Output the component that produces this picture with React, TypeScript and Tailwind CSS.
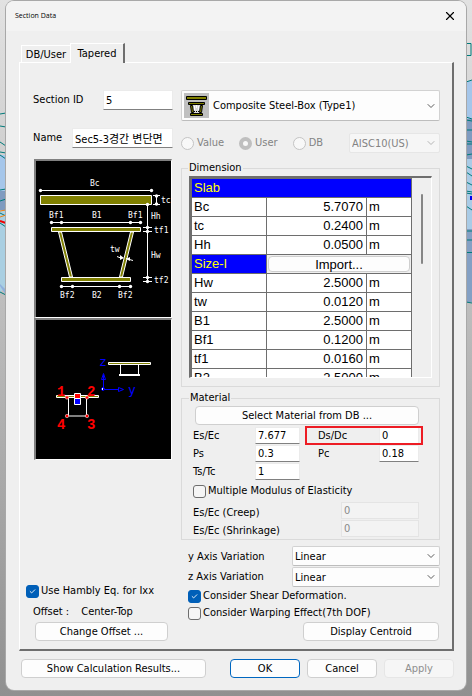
import type { ReactNode } from "react";
import { Check, ChevronDown, X } from "lucide-react";
import clsx from "clsx";

type Dimension = { name: string; value: string };

const slabRows: Dimension[] = [
  { name: "Bc", value: "5.7070" },
  { name: "tc", value: "0.2400" },
  { name: "Hh", value: "0.0500" },
];

const girderRows: Dimension[] = [
  { name: "Hw", value: "2.5000" },
  { name: "tw", value: "0.0120" },
  { name: "B1", value: "2.5000" },
  { name: "Bf1", value: "0.1200" },
  { name: "tf1", value: "0.0160" },
  { name: "B2", value: "2.5000" },
];

function Backdrop() {
  return (
    <>
      <svg className="absolute left-0 top-0" width="6" height="696" fill="none" aria-hidden="true">
        <path d="M0 155h6v36H0z" fill="#a5c6ea" />
        <path d="M0 191h6v19H0z" fill="#7f9bc0" />
        <path d="M0 210h6v76l-6 7z" fill="#a9cfe2" />
        <path d="M0 286l6 9v-5l-6-6z" fill="#8fb0dd" />
        <path
          d="M0 114l6-1M0 126l6 1M0 142l6 4M0 152l6 1M0 155l6 4M0 190l6-1M0 201l6-2M0 213l6 3M0 223l6 4M0 292l6 3"
          stroke="#007a7a"
        />
        <path d="M0 211l6-1M0 217l6-2" stroke="#f08010" />
        <path d="M0 221l6 2" stroke="#f00000" strokeWidth="2" />
      </svg>
      <svg className="absolute right-0 top-0" width="6" height="696" fill="none" aria-hidden="true">
        <path d="M0 81h6v38H0z" fill="#a5c6ea" />
        <path d="M0 119h6v40H0z" fill="#7f9bc0" />
        <path d="M0 159h6v70H0z" fill="#a9cbe6" />
        <path d="M0 229h6v73H0z" fill="#84a0c4" />
        <path
          d="M0 43.500h5v12H0M0 82l6-2M0 117l6 2M0 120l6 1M0 130l6 0M0 141l6 1M0 144l6 0M0 155l6-1M0 166l6 3M0 172l6 4M0 182l6 3M0 191l6 1M0 193l6 1M0 206l6 4M0 231l6 0M0 240l6 0M0 252.500h6M0 302l6 1"
          stroke="#007a7a"
        />
        <path d="M4 196h2v4H4z" fill="#0000f0" />
      </svg>
    </>
  );
}

function Button({
  children,
  className,
  disabled,
  primary,
}: {
  children: ReactNode;
  className?: string;
  disabled?: boolean;
  primary?: boolean;
}) {
  return (
    <button
      type="button"
      disabled={disabled}
      className={clsx(
        "flex h-[19px] items-center justify-center rounded-[4px] border bg-[#fdfdfd] text-[11px] leading-none disabled:border-[#e6e6e6] disabled:bg-[#f6f6f6] disabled:text-[#8e8e8e]",
        primary ? "border-[#0067c0]" : "border-[#cfcfcf]",
        className
      )}
    >
      {children}
    </button>
  );
}

function TextBox({
  id,
  value,
  className,
  disabled,
}: {
  id: string;
  value: string;
  className?: string;
  disabled?: boolean;
}) {
  return (
    <input
      id={id}
      type="text"
      defaultValue={value}
      disabled={disabled}
      className={clsx(
        "min-w-0 border border-[#ebebeb] border-b-[#808080] bg-white px-0.5 text-[11px] leading-none outline-none disabled:border-[#e4e4e4] disabled:bg-[#f3f3f3] disabled:text-[#8a8a8a]",
        className
      )}
    />
  );
}

function CheckBox({ label, checked }: { label: string; checked?: boolean }) {
  return (
    <label className="flex h-[14px] items-center gap-[2px] whitespace-nowrap">
      <span className="relative flex">
        <input
          type="checkbox"
          defaultChecked={checked}
          className="peer size-[13px] appearance-none rounded-[3px] border border-[#6e6e6e] bg-[#f5f5f5] checked:border-[#005fb8] checked:bg-[#005fb8]"
        />
        <Check
          className="pointer-events-none absolute left-[3px] top-[3px] hidden size-[7px] text-white peer-checked:block"
          strokeWidth={3}
        />
      </span>
      {label}
    </label>
  );
}

function Radio({ label, checked }: { label: string; checked?: boolean }) {
  return (
    <label className="flex items-center gap-[3px] text-[#838383]">
      <input
        type="radio"
        name="source"
        defaultChecked={checked}
        disabled
        className="size-[13px] appearance-none rounded-full border border-[#c4c4c4] bg-[#f8f8f8] checked:border-4 checked:border-[#bfbfbf]"
      />
      {label}
    </label>
  );
}

function Select({
  id,
  label,
  value,
  className,
  disabled,
  icon,
}: {
  id: string;
  label?: string;
  value: string;
  className?: string;
  disabled?: boolean;
  icon?: ReactNode;
}) {
  return (
    <div
      className={clsx(
        "relative flex items-center rounded-[2px] border px-0.5",
        disabled
          ? "border-[#e6e6e6] bg-[#f6f6f6] text-[#838383]"
          : "border-[#d2d2d2] border-b-[#bdbdbd] bg-[#fdfdfd]",
        className
      )}
    >
      {icon}
      <select
        id={id}
        aria-label={label}
        disabled={disabled}
        className="h-full min-w-0 flex-1 appearance-none bg-transparent text-[11px] leading-none outline-none"
      >
        <option>{value}</option>
      </select>
      <ChevronDown
        className={clsx(
          "pointer-events-none absolute right-[2px] size-[12px]",
          disabled ? "text-[#b5b5b5]" : "text-[#5c5c5c]"
        )}
        strokeWidth={2}
      />
    </div>
  );
}

function BoxSectionIcon() {
  return (
    <svg width="25" height="25" viewBox="0 0 25 25" className="mr-1 shrink-0 bg-[#c0c0c0]" aria-hidden="true">
      <path d="M8 12h9v9H8z" fill="#dcdcdc" />
      <path d="M10.500 13v4M12.500 12v3M14.500 13v4" stroke="#fff" />
      <g fill="#808000" stroke="#000">
        <path d="M2.500 3.500h20v3h-20z" />
        <path d="M6.500 12.500h2l1 7h-2zM18.500 12.500h-2l-1 7h2z" />
        <path d="M4.500 9.500h16v2h-16zM6.500 20.500h12v2h-12z" />
      </g>
      <path d="M10 18.500h5" stroke="#000" strokeDasharray="1 1" />
    </svg>
  );
}

function Dot({ x, y }: { x: number; y: number }) {
  return <circle cx={x} cy={y} r="1.700" fill="#fff" />;
}

function SectionDiagram() {
  return (
    <svg viewBox="6 6 135 156" className="block w-full bg-black" role="img" aria-label="Section dimensions">
      <g fill="#808000" stroke="#fff">
        <path d="M10.500 40.500h111v9h-111zM21.500 72.500h89v4h-89zM31.500 122.500h69v4h-69z" />
        <path d="M28.500 77h3l11 45h-3zM100.500 77h3l-11 45h-3z" />
      </g>
      <g stroke="#fff" fill="none">
        <path d="M10 35.500h112M21 67.500h90M31 131.500h70M117.500 49v78M126.500 40v10" />
        <path d="M123 40.500h7M123 49.500h7M113 72.500h9M113 76.500h9M113 122.500h9M113 126.500h9M87 101.500l5 2M96 103.500l7 2" />
      </g>
      <path d="M90 100l4 3-4 2zM100 102l-4 2 4 2z" fill="#fff" />
      <Dot x={10.5} y={35.5} />
      <Dot x={121.5} y={35.5} />
      <Dot x={21.5} y={67.5} />
      <Dot x={31.5} y={67.5} />
      <Dot x={100.5} y={67.5} />
      <Dot x={110.5} y={67.5} />
      <Dot x={31.5} y={131.5} />
      <Dot x={42.5} y={131.5} />
      <Dot x={89.5} y={131.5} />
      <Dot x={100.5} y={131.5} />
      <Dot x={117.5} y={49.5} />
      <Dot x={117.5} y={72.5} />
      <Dot x={117.5} y={76.5} />
      <Dot x={117.5} y={122.5} />
      <Dot x={117.5} y={126.5} />
      <Dot x={126.5} y={41} />
      <Dot x={126.5} y={49} />
      <g fill="#fff" className="font-['DejaVu_Sans_Mono',monospace] text-[8px]">
        <text x="60" y="31">Bc</text>
        <text x="131" y="48">tc</text>
        <text x="19" y="63">Bf1</text>
        <text x="62" y="63">B1</text>
        <text x="98" y="63">Bf1</text>
        <text x="121" y="64">Hh</text>
        <text x="124" y="78">tf1</text>
        <text x="80" y="97">tw</text>
        <text x="121" y="103">Hw</text>
        <text x="124" y="128">tf2</text>
        <text x="30" y="143">Bf2</text>
        <text x="62" y="143">B2</text>
        <text x="88" y="143">Bf2</text>
      </g>
    </svg>
  );
}

function OffsetDiagram() {
  return (
    <svg viewBox="6 5 135 139" className="block w-full bg-black" role="img" aria-label="Section offset">
      <g fill="#808000" stroke="#fff">
        <path d="M78.500 47.500h42v2h-42zM26.500 80.500h42v2h-42z" />
      </g>
      <g fill="none" stroke="#fff">
        <path d="M90.500 50v9M108.500 50v9M38.500 83v18h18V83" />
        <path d="M89 60h21" strokeWidth="2" />
      </g>
      <g fill="none" stroke="#00f">
        <path d="M73.500 74V60M74 74.500h15M71.500 64.500l2-6 2 6zM88.500 72.500l5 2-5 2z" />
        <circle cx="73" cy="74" r="1.500" />
      </g>
      <path d="M72 73h1v2h-1z" fill="#fff" />
      <g stroke="#fff">
        <path d="M44.500 78.500h6v5h-6z" fill="red" />
        <path d="M44.500 83.500h6v6h-6z" fill="#00f" />
      </g>
      <g fill="red" stroke="#fff" strokeWidth="0.500">
        <circle cx="37" cy="82.500" r="1.700" />
        <circle cx="57" cy="82.500" r="1.700" />
        <circle cx="37" cy="101" r="1.700" />
        <circle cx="57" cy="101" r="1.700" />
      </g>
      <g fill="#00f" className="font-['DejaVu_Sans_Mono',monospace] text-[13px]">
        <text x="69" y="51">z</text>
        <text x="98" y="79">y</text>
      </g>
      <g fill="red" className="font-['Liberation_Mono',monospace] text-[14px] font-bold">
        <text x="27" y="81">1</text>
        <text x="57" y="81">2</text>
        <text x="57" y="114">3</text>
        <text x="27" y="114">4</text>
      </g>
    </svg>
  );
}

function DimensionRow({ name, value }: Dimension) {
  return (
    <tr className="h-[19px]">
      <td className="border border-[#6e6e6e] px-0.5">{name}</td>
      <td className="border border-[#6e6e6e] px-[3px] text-right">{value}</td>
      <td className="border border-[#6e6e6e] px-0.5">m</td>
    </tr>
  );
}

function DimensionTable() {
  return (
    <div className="flex h-[202px] overflow-hidden border-2 border-b border-r border-[#6e6e6e] border-b-white border-r-white">
      <table className="h-min w-[221px] table-fixed border-collapse bg-white font-['Liberation_Sans',Arial,sans-serif] text-[13px] leading-4">
        <colgroup>
          <col className="w-[75px]" />
          <col className="w-[100px]" />
          <col className="w-[45px]" />
        </colgroup>
        <tbody>
          <tr className="h-[19px]">
            <th colSpan={3} className="border border-[#6e6e6e] bg-[#0000ff] px-0.5 text-left font-normal text-[#ffff00]">
              Slab
            </th>
          </tr>
          {slabRows.map((row) => (
            <DimensionRow key={row.name} {...row} />
          ))}
          <tr className="h-[19px]">
            <th className="border border-[#6e6e6e] bg-[#0000ff] px-0.5 text-left font-normal text-[#ffff00]">Size-I</th>
            <td colSpan={2} className="border border-[#6e6e6e] bg-[#efefef] px-px">
              <button
                type="button"
                className="block h-4 w-full rounded-[4px] border border-[#cfcfcf] bg-[#fdfdfd] leading-none"
              >
                Import...
              </button>
            </td>
          </tr>
          {girderRows.map((row) => (
            <DimensionRow key={row.name} {...row} />
          ))}
        </tbody>
      </table>
      <div className="flex flex-1 justify-center pt-4">
        <div className="h-[70px] w-[2px] rounded-full bg-[#858585]" />
      </div>
    </div>
  );
}

export default function App() {
  return (
    <main className="relative min-h-screen bg-gradient-to-b from-[#e2e2e2] to-[#909090] px-1.5 pt-px font-['DejaVu_Sans_Condensed','Noto_Sans_CJK_KR',sans-serif] text-[11px] leading-3 text-black">
      <Backdrop />
      <section className="relative overflow-hidden rounded-[8px] bg-[#efefef] shadow-[0_0_0_1px_#a8a8a8]">
        <header className="flex h-[30px] items-center justify-between bg-[#f3f3f3] px-[9px]">
          <h1 className="font-['Open_Sans',sans-serif] text-[7px]">Section Data</h1>
          <button type="button" aria-label="Close">
            <X className="size-[14px]" strokeWidth={2} />
          </button>
        </header>

        <div className="pb-3 pl-[13px] pr-3 pt-3">
          <div className="flex items-end pl-[2px]" role="tablist">
            <button
              type="button"
              role="tab"
              className="h-[17px] w-[49px] border-l border-t border-white text-[11px] leading-none"
            >
              DB/User
            </button>
            <button
              type="button"
              role="tab"
              aria-selected="true"
              className="relative -mb-px h-5 w-[55px] border-l border-r-2 border-t border-white border-r-[#6e6e6e] bg-[#efefef] text-[11px] leading-none"
            >
              Tapered
            </button>
          </div>

          <div className="flex gap-2 border-b-2 border-l border-r-2 border-t border-white border-b-[#6e6e6e] border-r-[#6e6e6e] pb-2 pl-1.5 pr-3 pt-[27px]">
            <div className="flex w-[147px] shrink-0 flex-col">
              <div className="flex flex-col pl-[7px]">
                <div className="flex items-center justify-between">
                  <label htmlFor="section-id">Section ID</label>
                  <TextBox id="section-id" value="5" className="h-5 w-[70px]" />
                </div>
                <div className="mt-[18px] flex items-center gap-2">
                  <label htmlFor="name" className="w-[31px]">
                    Name
                  </label>
                  <TextBox id="name" value="Sec5-3경간 변단면" className="h-5 flex-1" />
                </div>
                <div className="mx-px mt-[11px] border-2 border-b border-r border-[#808080] border-b-white border-r-white">
                  <SectionDiagram />
                </div>
                <div className="mx-px border-2 border-b border-r border-[#808080] border-b-white border-r-white">
                  <OffsetDiagram />
                </div>
              </div>
              <div className="mt-auto flex flex-col gap-1">
                <CheckBox label="Use Hambly Eq. for Ixx" checked />
                <p className="flex gap-3 pl-[7px] pt-1">
                  <span>Offset :</span>
                  <span>Center-Top</span>
                </p>
                <Button className="ml-[9px] w-[133px]">Change Offset ...</Button>
              </div>
            </div>

            <div className="flex min-w-0 flex-1 flex-col">
              <Select
                id="section-type"
                label="Section type"
                value="Composite Steel-Box (Type1)"
                className="h-[31px]"
                icon={<BoxSectionIcon />}
              />
              <div className="mt-3 flex items-center">
                <div className="flex flex-1 items-center gap-[15px]">
                  <Radio label="Value" />
                  <Radio label="User" checked />
                  <Radio label="DB" />
                </div>
                <Select id="database" label="Database" value="AISC10(US)" className="h-5 w-[91px]" disabled />
              </div>

              <fieldset className="mt-[9px] min-w-0 border border-[#dadada] px-[7px] pb-2 pt-0.5">
                <legend className="-ml-px px-px">Dimension</legend>
                <DimensionTable />
              </fieldset>

              <fieldset className="mt-[5px] min-w-0 border border-[#dadada] px-[11px] pb-0.5">
                <legend className="-ml-1 px-px">Material</legend>
                <Button className="ml-0.5 mt-0.5 w-56">Select Material from DB ...</Button>
                <div className="mt-0.5 grid grid-cols-[62px_45px_18px_61px_40px] items-center gap-y-px">
                  <label htmlFor="es-ec">Es/Ec</label>
                  <TextBox id="es-ec" value="7.677" className="h-[17px]" />
                  <div className="relative col-span-3 col-start-3 flex items-center justify-between pl-[18px]">
                    <label htmlFor="ds-dc">Ds/Dc</label>
                    <TextBox id="ds-dc" value="0" className="h-[17px] w-10" />
                    <span className="pointer-events-none absolute -inset-y-px -right-1 left-[5px] border-2 border-[#ed1c24]" />
                  </div>
                  <label htmlFor="ps">Ps</label>
                  <TextBox id="ps" value="0.3" className="h-[17px]" />
                  <label htmlFor="pc" className="col-start-4">
                    Pc
                  </label>
                  <TextBox id="pc" value="0.18" className="h-[17px]" />
                  <label htmlFor="ts-tc">Ts/Tc</label>
                  <TextBox id="ts-tc" value="1" className="h-[17px]" />
                </div>
                <div className="mt-1">
                  <CheckBox label="Multiple Modulus of Elasticity" />
                </div>
                <div className="mt-1 grid grid-cols-[148px_78px] items-center gap-y-px">
                  <label htmlFor="creep" className="pt-1">
                    Es/Ec (Creep)
                  </label>
                  <TextBox id="creep" value="0" className="h-[17px]" disabled />
                  <label htmlFor="shrinkage" className="pt-1">
                    Es/Ec (Shrinkage)
                  </label>
                  <TextBox id="shrinkage" value="0" className="h-[17px]" disabled />
                </div>
              </fieldset>

              <div className="mt-1.5 grid grid-cols-[1fr_148px] items-center gap-y-px pl-[7px]">
                <label htmlFor="y-axis" className="pt-0.5">
                  y Axis Variation
                </label>
                <Select id="y-axis" value="Linear" className="h-5" />
                <label htmlFor="z-axis">z Axis Variation</label>
                <Select id="z-axis" value="Linear" className="h-5" />
              </div>
              <div className="mt-0.5 flex flex-col gap-[3px] pl-[7px]">
                <CheckBox label="Consider Shear Deformation." checked />
                <CheckBox label="Consider Warping Effect(7th DOF)" />
              </div>
              <Button className="mr-px mt-0.5 w-[136px] self-end">Display Centroid</Button>
            </div>
          </div>

          <footer className="mt-2 flex justify-between pl-[2px]">
            <Button className="w-[185px]">Show Calculation Results...</Button>
            <div className="flex gap-[7px]">
              <Button className="w-[70px]" primary>
                OK
              </Button>
              <Button className="w-[70px]">Cancel</Button>
              <Button className="w-[70px]" disabled>
                Apply
              </Button>
            </div>
          </footer>
        </div>
      </section>
    </main>
  );
}
